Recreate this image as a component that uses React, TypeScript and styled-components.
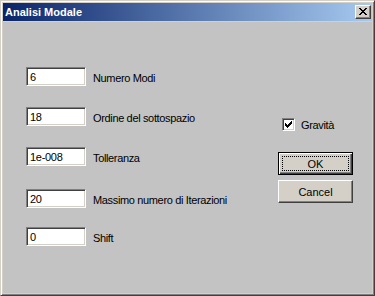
import React from "react";
import styled, { createGlobalStyle } from "styled-components";

const Global = createGlobalStyle`
  html, body { margin: 0; padding: 0; background: #d4d0c8; }
  body { width: 375px; height: 296px; overflow: hidden; }
  * { box-sizing: border-box; }
`;

const FONT = `"Liberation Sans", Arial, sans-serif`;

const Window = styled.div`
  width: 375px;
  height: 296px;
  display: flex;
  flex-direction: column;
  background: #d4d0c8;
  border: 1px solid;
  border-color: #d4d0c8 #404040 #404040 #d4d0c8;
  box-shadow: inset 1px 1px #ffffff, inset -1px -1px #808080;
  padding: 2px;
  font-family: ${FONT};
  font-size: 11px;
  color: #000;
`;

const TitleBar = styled.div`
  height: 18px;
  flex: none;
  display: flex;
  align-items: center;
  justify-content: space-between;
  padding: 0 1px 0 2px;
  background: linear-gradient(to right, #0a246a, #a6caf0);
  margin-bottom: 1px;
`;

const Title = styled.span`
  color: #fff;
  font-weight: bold;
  font-size: 11px;
  line-height: 18px;
`;

const CloseButton = styled.div`
  width: 16px;
  height: 14px;
  background: #d4d0c8;
  border: 1px solid;
  border-color: #ffffff #404040 #404040 #ffffff;
  box-shadow: inset -1px -1px #808080;
  display: flex;
  padding: 2px 0 0 3px;
`;

const Body = styled.div`
  flex: 1;
  display: flex;
  background: #c3c3c3;
`;

const LeftColumn = styled.div`
  display: flex;
  flex-direction: column;
  padding: 45px 0 0 23px;
`;

const Row = styled.div<{ $top: number }>`
  display: flex;
  align-items: flex-start;
  height: 19px;
  margin-top: ${(p) => p.$top}px;
`;

const Field = styled.input`
  width: 60px;
  height: 19px;
  margin: 0;
  padding: 1px 3px 0;
  background: #ffffff;
  border: 1px solid;
  border-color: #808080 #ffffff #ffffff #808080;
  box-shadow: inset 1px 1px #404040, inset -1px -1px #d4d0c8;
  font-family: ${FONT};
  font-size: 11px;
  letter-spacing: -0.3px;
  color: #000;
  outline: none;
`;

const Label = styled.span`
  margin-left: 7px;
  padding-top: 2px;
  line-height: 19px;
  letter-spacing: -0.35px;
  white-space: nowrap;
`;

const RightColumn = styled.div`
  margin-left: auto;
  margin-right: 19px;
  width: 75px;
  display: flex;
  flex-direction: column;
  padding-top: 96px;
`;

const CheckRow = styled.label`
  display: flex;
  align-items: center;
  margin-left: 4px;
  height: 13px;
  gap: 6px;
  letter-spacing: -0.35px;
`;

const CheckBox = styled.span`
  width: 13px;
  height: 13px;
  flex: none;
  background: #fff;
  border: 1px solid;
  border-color: #808080 #ffffff #ffffff #808080;
  box-shadow: inset 1px 1px #404040, inset -1px -1px #d4d0c8;
  display: flex;
  padding: 2px 0 0 2px;
`;

const ButtonStack = styled.div`
  display: flex;
  flex-direction: column;
  gap: 5px;
  margin-top: 21px;
`;

const Button = styled.button<{ $default?: boolean }>`
  width: 75px;
  height: 23px;
  margin: 0;
  padding: 0;
  position: relative;
  font-family: ${FONT};
  font-size: 11px;
  color: #000;
  background: #d4d0c8;
  border: 1px solid;
  border-color: ${(p) => (p.$default ? "#000" : "#ffffff #404040 #404040 #ffffff")};
  box-shadow: ${(p) =>
    p.$default
      ? "inset 1px 1px #ffffff, inset -1px -1px #404040, inset -2px -2px #808080"
      : "inset -1px -1px #808080, inset 1px 1px #d4d0c8"};
`;

const Focus = styled.span`
  position: absolute;
  inset: 3px;
  border: 1px dotted #000;
`;

const rows = [
  { value: "6", label: "Numero Modi", top: 0 },
  { value: "18", label: "Ordine del sottospazio", top: 21 },
  { value: "1e-008", label: "Tolleranza", top: 21 },
  { value: "20", label: "Massimo numero di Iterazioni", top: 23 },
  { value: "0", label: "Shift", top: 19 },
];

const checkTops = [2, 3, 4, 3, 2, 1, 0];
const xRows = [
  [0, 6],
  [1, 5],
  [2, 4],
  [3, 3],
  [2, 4],
  [1, 5],
  [0, 6],
];

export default function App() {
  return (
    <>
      <Global />
      <Window>
        <TitleBar>
          <Title>Analisi Modale</Title>
          <CloseButton>
            <svg width="8" height="7" viewBox="0 0 8 7" shapeRendering="crispEdges">
              {xRows.map(([a, b], y) => (
                <g key={y}>
                  <rect x={a} y={y} width={2} height={1} fill="#000" />
                  {a !== b && <rect x={b} y={y} width={2} height={1} fill="#000" />}
                </g>
              ))}
            </svg>
          </CloseButton>
        </TitleBar>
        <Body>
          <LeftColumn>
            {rows.map((r) => (
              <Row key={r.label} $top={r.top}>
                <Field defaultValue={r.value} readOnly />
                <Label>{r.label}</Label>
              </Row>
            ))}
          </LeftColumn>
          <RightColumn>
            <CheckRow>
              <CheckBox>
                <svg width="7" height="7" viewBox="0 0 7 7" shapeRendering="crispEdges">
                  {checkTops.map((t, i) => (
                    <rect key={i} x={i} y={t} width={1} height={3} fill="#000" />
                  ))}
                </svg>
              </CheckBox>
              Gravità
            </CheckRow>
            <ButtonStack>
              <Button $default>
                <Focus />
                OK
              </Button>
              <Button>Cancel</Button>
            </ButtonStack>
          </RightColumn>
        </Body>
      </Window>
    </>
  );
}
